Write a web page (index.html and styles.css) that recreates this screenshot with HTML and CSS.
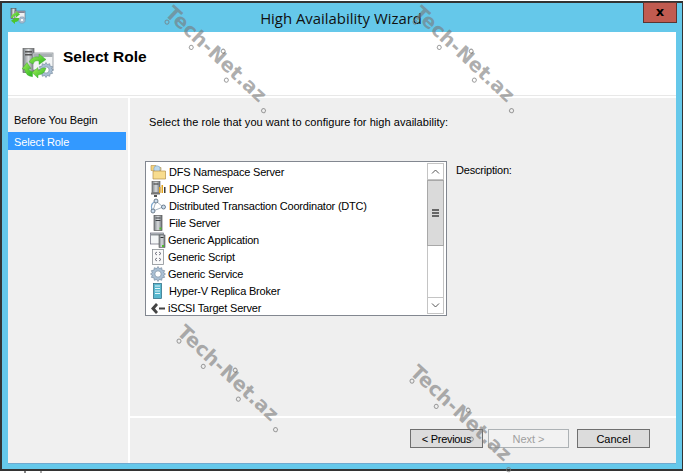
FILE: index.html
```html
<!DOCTYPE html>
<html lang="en">
<head>
<meta charset="utf-8">
<title>High Availability Wizard</title>
<link rel="stylesheet" href="styles.css">
</head>
<body>
<svg class="defs" width="0" height="0" aria-hidden="true">
  <defs>
    <linearGradient id="srv" x1="0" x2="1" y1="0" y2="0"><stop offset="0" stop-color="#7d8388"/><stop offset=".5" stop-color="#d9dcde"/><stop offset="1" stop-color="#6c7176"/></linearGradient>
    <linearGradient id="grn" x1="0" x2="1" y1="0" y2="1"><stop offset="0" stop-color="#a6ef5c"/><stop offset="1" stop-color="#27b51f"/></linearGradient>
    <symbol id="gear" viewBox="0 0 16 16">
      <path d="M8 0.5l1.400 2.100 2.300-.9.4 2.500 2.500.4-.9 2.300L15.500 8l-1.800 1.100.9 2.300-2.500.4-.4 2.500-2.300-.9L8 15.500l-1.400-2.100-2.300.9-.4-2.500-2.500-.4.9-2.300L.5 8l1.800-1.100-.9-2.300 2.500-.4.4-2.500 2.300.9z" fill="#a9bfd4" stroke="#6d8296" stroke-width=".6"/>
      <circle cx="8" cy="8" r="3.200" fill="#fff" stroke="#7e93a6" stroke-width=".8"/>
    </symbol>
    <symbol id="tower" viewBox="0 0 16 16">
      <rect x="4" y="0.500" width="8" height="15" fill="url(#srv)" stroke="#555" stroke-width=".7"/>
      <rect x="5.500" y="2.500" width="5" height="1" fill="#3c4044"/>
      <rect x="5.500" y="5" width="5" height="1" fill="#3c4044"/>
      <rect x="9.500" y="12.500" width="2" height="2" fill="#4fc02f"/>
    </symbol>
  </defs>
</svg>
<div class="window">
  <div class="titlebar">
    <svg class="title-icon" viewBox="0 0 16 16" width="16" height="16" aria-hidden="true">
      <rect x="1" y="0.500" width="5" height="10" fill="url(#srv)" stroke="#555" stroke-width=".6"/>
      <rect x="5" y="3" width="10" height="8" fill="#eef1f3" stroke="#667" stroke-width=".6"/>
      <rect x="5.300" y="3.300" width="9.400" height="1.600" fill="#778"/>
      <use href="#gear" x="8" y="8" width="8" height="8"/>
      <path d="M1 10a5 5 0 0 1 5-5v-2l4 3.200-4 3.200v-2a3 3 0 0 0-3 2.600z" fill="url(#grn)"/>
      <path d="M9 10a4 4 0 0 1-4 4v2l-4-3.200 4-3z" fill="#4cc52d"/>
    </svg>
    <span class="title-text">High Availability Wizard</span>
    <div class="close-btn"><span class="close-x">x</span></div>
  </div>
  <div class="client">
    <header class="head">
      <svg class="head-icon" viewBox="0 0 32 32" width="32" height="32" aria-hidden="true">
        <rect x="1" y="0.500" width="11" height="24" fill="url(#srv)" stroke="#666" stroke-width=".7"/>
        <rect x="3" y="3" width="7" height="1.500" fill="#555"/>
        <rect x="3" y="6" width="7" height="1.500" fill="#555"/>
        <rect x="11" y="5" width="20" height="17" fill="#f3f5f6" stroke="#8a9096" stroke-width=".8"/>
        <rect x="11.500" y="5.500" width="19" height="3.500" fill="#a9afb4"/>
        <use href="#gear" x="16" y="14" width="16" height="16"/>
        <path d="M7 14a9 9 0 0 1 10-5V6l7 5.500-7 5v-3.500a5 5 0 0 0-6 3z" fill="url(#grn)" stroke="#2f9e2a" stroke-width=".4"/>
        <path d="M0 21l5-6.500 4 6-2.500 .2a5 5 0 0 0 4 3v5a9 9 0 0 1-8-7.500z" fill="url(#grn)" stroke="#2f9e2a" stroke-width=".4"/>
        <path d="M24 20a9 9 0 0 1-8 7v3l-6-5.500 6-5v3a5 5 0 0 0 4-2.500z" fill="url(#grn)" stroke="#2f9e2a" stroke-width=".4"/>
      </svg>
      <h1 class="head-title">Select Role</h1>
    </header>
    <div class="body">
      <nav class="steps">
        <div class="step">Before You Begin</div>
        <div class="step step-active">Select Role</div>
      </nav>
      <main class="main">
        <div class="content">
          <p class="prompt">Select the role that you want to configure for high availability:</p>
          <div class="picker">
            <div class="listbox">
              <ul class="items">
                <li class="item">
                  <svg class="ico" viewBox="0 0 16 16" aria-hidden="true"><path d="M1 6V1.500h5l1 2h4v3H1z" fill="#f3d27d" stroke="#b5904a" stroke-width=".6"/><circle cx="7" cy="5" r="3.200" fill="#bcd9ee" stroke="#7a9db8" stroke-width=".6"/><path d="M3 7h12.500v8H3z" fill="#f8dc8e" stroke="#b5904a" stroke-width=".7"/></svg>
                  <span>DFS Namespace Server</span>
                </li>
                <li class="item">
                  <svg class="ico" viewBox="0 0 16 16" aria-hidden="true"><rect x="2" y="0.500" width="8" height="11" fill="url(#srv)" stroke="#555" stroke-width=".6"/><rect x="3.500" y="2.500" width="5" height="1" fill="#333"/><rect x="1" y="11.500" width="9" height="2" fill="#777"/><rect x="9" y="6" width="1.500" height="6" fill="#e1a21b"/><rect x="11.500" y="4" width="1.500" height="8" fill="#e1a21b"/><rect x="14" y="6" width="1.500" height="6" fill="#3a3a3a"/><rect x="4" y="14" width="3" height="2" fill="#555"/></svg>
                  <span>DHCP Server</span>
                </li>
                <li class="item">
                  <svg class="ico" viewBox="0 0 16 16" aria-hidden="true"><path d="M6 3L13 9 3 13z" fill="none" stroke="#9ab" stroke-width=".9"/><path d="M3 13a6 6 0 0 1 1-9" fill="none" stroke="#7fa9cf" stroke-width="1.200"/><circle cx="6" cy="3" r="2" fill="#cde" stroke="#456" stroke-width=".7"/><circle cx="13.500" cy="9" r="2" fill="#cde" stroke="#456" stroke-width=".7"/><circle cx="3" cy="13" r="2" fill="#cde" stroke="#456" stroke-width=".7"/></svg>
                  <span>Distributed Transaction Coordinator (DTC)</span>
                </li>
                <li class="item">
                  <svg class="ico" viewBox="0 0 16 16" aria-hidden="true"><use href="#tower"/></svg>
                  <span>File Server</span>
                </li>
                <li class="item item-tight">
                  <svg class="ico" viewBox="0 0 16 16" aria-hidden="true"><rect x="0.500" y="1" width="13" height="11" fill="#f4f6f7" stroke="#667" stroke-width=".7"/><rect x="1" y="1.500" width="12" height="2" fill="#8d9499"/><rect x="9" y="3" width="6" height="12.500" fill="url(#srv)" stroke="#555" stroke-width=".6"/><rect x="10.500" y="5" width="3" height="1" fill="#333"/><rect x="12" y="13" width="2" height="2" fill="#4fc02f"/></svg>
                  <span>Generic Application</span>
                </li>
                <li class="item item-tight">
                  <svg class="ico" viewBox="0 0 16 16" aria-hidden="true"><rect x="2.500" y="0.500" width="11" height="15" fill="#fafafa" stroke="#8a8f94" stroke-width=".8"/><path d="M7 3L5 4.500 7 6M9 3l2 1.500L9 6M7 9l-2 1.500L7 12M9 9l2 1.500L9 12" fill="none" stroke="#556" stroke-width=".8"/></svg>
                  <span>Generic Script</span>
                </li>
                <li class="item item-tight">
                  <svg class="ico" viewBox="0 0 16 16" aria-hidden="true"><use href="#gear"/></svg>
                  <span>Generic Service</span>
                </li>
                <li class="item">
                  <svg class="ico" viewBox="0 0 16 16" aria-hidden="true"><rect x="3.500" y="0.500" width="8" height="15" fill="#58b8cf" stroke="#23667c" stroke-width=".7"/><path d="M5 3h5M5 5.500h5M5 8h5M5 10.500h5" stroke="#e5f7fb" stroke-width="1"/></svg>
                  <span>Hyper-V Replica Broker</span>
                </li>
                <li class="item item-tight">
                  <svg class="ico" viewBox="0 0 16 16" aria-hidden="true"><path d="M6 3L1 8.500l5 5.500 2-2-3-3.500 3-3.500zM9 7.500h6v2H9z" fill="#444"/></svg>
                  <span>iSCSI Target Server</span>
                </li>
              </ul>
              <div class="scrollbar">
                <div class="sb-btn"><svg viewBox="0 0 9 5" width="9" height="5" aria-hidden="true"><path d="M1 4.500l3.500-3.500 3.500 3.500" fill="none" stroke="#555" stroke-width="1"/></svg></div>
                <div class="sb-thumb"><span class="grip"></span><span class="grip"></span><span class="grip"></span></div>
                <div class="sb-track"></div>
                <div class="sb-btn"><svg viewBox="0 0 9 5" width="9" height="5" aria-hidden="true"><path d="M1 .5l3.500 3.500 3.500-3.500" fill="none" stroke="#555" stroke-width="1"/></svg></div>
              </div>
            </div>
            <div class="desc">Description:</div>
          </div>
        </div>
        <footer class="footer">
          <button class="btn btn-prev" type="button">&lt; Previous</button>
          <button class="btn btn-next" type="button" disabled>Next &gt;</button>
          <button class="btn btn-cancel" type="button">Cancel</button>
        </footer>
      </main>
    </div>
  </div>
</div>
<div class="below"><span class="below-bit"></span></div>
<div class="wm wm-a"><span class="wm-text">Tech-Net.az</span><i class="ring r1"></i><i class="ring r2"></i><i class="ring r3"></i><i class="ring r4"></i><i class="ring r5"></i></div>
<div class="wm wm-b"><span class="wm-text">Tech-Net.az</span><i class="ring r1"></i><i class="ring r2"></i><i class="ring r3"></i><i class="ring r4"></i><i class="ring r5"></i></div>
<div class="wm wm-c"><span class="wm-text">Tech-Net.az</span><i class="ring r1"></i><i class="ring r2"></i><i class="ring r3"></i><i class="ring r4"></i><i class="ring r5"></i></div>
<div class="wm wm-d"><span class="wm-text">Tech-Net.az</span><i class="ring r1"></i><i class="ring r2"></i><i class="ring r3"></i><i class="ring r4"></i><i class="ring r5"></i></div>
</body>
</html>
```
FILE: styles.css
```css
* { box-sizing: border-box; }
html, body { margin: 0; padding: 0; }
body {
  width: 683px;
  height: 473px;
  overflow: hidden;
  position: relative;
  background: #fff;
  font-family: "Liberation Sans", Arial, sans-serif;
  font-size: 11px;
  color: #000;
}
.defs { position: absolute; }
.window {
  margin-top: 1px;
  width: 683px;
  height: 470px;
  background: #65c8ea;
  border: 2px solid #333;
  border-width: 2px 1px 2px 2px;
  display: flex;
  flex-direction: column;
  padding: 0 6px 6px 6px;
}
.titlebar {
  height: 29px;
  flex: none;
  position: relative;
  display: flex;
  align-items: center;
  justify-content: center;
}
.title-icon { position: absolute; left: 2px; top: 5px; }
.title-text {
  font-family: "Open Sans", sans-serif;
  font-size: 14.9px;
  color: #111;
  margin-left: -2px;
  margin-top: 1px;
}
.close-btn {
  position: absolute;
  right: -1px;
  top: -1px;
  width: 34px;
  height: 21px;
  background: #c15b50;
  border: 1px solid #5b3531;
  display: flex;
  align-items: center;
  justify-content: center;
}
.close-x {
  font-family: "DejaVu Sans", sans-serif;
  font-weight: 700;
  font-size: 13px;
  line-height: 1;
  margin-top: -3px;
}
.client {
  flex: 1;
  min-height: 0;
  display: flex;
  flex-direction: column;
  background: #fff;
  box-shadow: 0 1px 0 #6fa9cf;
}
.head {
  height: 66px;
  flex: none;
  display: flex;
  align-items: flex-start;
  position: relative;
  padding: 16px 0 0 14px;
  background: linear-gradient(#fff 63px, #e8e8e8 63px, #e8e8e8 64px, #fff 64px);
}
.head-title {
  margin: 1px 0 0 9px;
  font-size: 15.5px;
  line-height: 16px;
  font-weight: 700;
}
.body {
  flex: 1;
  min-height: 0;
  display: flex;
  gap: 2px;
}
.steps {
  width: 120px;
  flex: none;
  background: #f0f0f0;
  padding-top: 13px;
}
.step {
  height: 21px;
  line-height: 18px;
  padding-left: 6px;
  letter-spacing: -0.1px;
}
.step-active {
  height: 18px;
  width: 118px;
  background: #3399ff;
  color: #fff;
  line-height: 20px;
}
.main {
  flex: 1;
  min-width: 0;
  background: #efefef;
  display: flex;
  flex-direction: column;
}
.content {
  flex: 1;
  min-height: 0;
  padding: 17px 0 0 15px;
}
.prompt {
  margin: 0 0 0 4px;
  line-height: 14px;
  letter-spacing: 0.05px;
}
.picker {
  display: flex;
  margin-top: 32px;
}
.listbox {
  width: 302px;
  height: 155px;
  background: #fff;
  border: 1px solid #828790;
  display: flex;
  overflow: hidden;
}
.items {
  list-style: none;
  margin: 0;
  padding: 1px 0 0 4px;
  flex: 1;
  min-width: 0;
  overflow: hidden;
}
.item {
  height: 17px;
  display: flex;
  align-items: center;
  gap: 3px;
  white-space: nowrap;
  letter-spacing: -0.2px;
}
.item-tight { gap: 2px; }
.ico { width: 16px; height: 16px; flex: none; }
.scrollbar {
  width: 17px;
  margin: 1px 2px 1px 0;
  flex: none;
  display: flex;
  flex-direction: column;
}
.sb-btn {
  height: 17px;
  flex: none;
  background: #fff;
  border: 1px solid #c4c4c4;
  display: flex;
  align-items: center;
  justify-content: center;
}
.sb-thumb {
  height: 66px;
  flex: none;
  background: #dadada;
  border: 1px solid #a8a8a8;
  display: flex;
  flex-direction: column;
  align-items: center;
  justify-content: center;
  gap: 1px;
}
.grip { width: 7px; height: 2px; background: #666; }
.sb-track {
  flex: 1;
  background: #fff;
  border-left: 1px solid #c4c4c4;
  border-right: 1px solid #c4c4c4;
}
.desc {
  margin: 2px 0 0 9px;
  line-height: 14px;
  letter-spacing: -0.2px;
}
.footer {
  height: 47px;
  flex: none;
  border-top: 2px solid #fff;
  display: flex;
  padding: 11px 0 0 280px;
}
.btn {
  font: inherit;
  height: 19px;
  padding: 0;
  color: #000;
  background: #dcdcdc;
  border: 1px solid #6f6f6f;
  border-radius: 0;
}
.btn-prev { width: 73px; letter-spacing: -0.3px; }
.btn-next {
  width: 81px;
  margin-left: 5px;
  background: #f2f2f2;
  border-color: #adb2b5;
  color: #a0a0a0;
}
.btn-cancel { width: 73px; margin-left: 8px; }
.below {
  height: 2px;
  position: relative;
}
.below-bit {
  position: absolute;
  left: 24px;
  top: 0;
  width: 18px;
  height: 2px;
  border-left: 2px solid #888;
  border-right: 2px solid #aaa;
}
.wm {
  position: absolute;
  width: 136px;
  height: 20px;
  transform-origin: 0 50%;
  transform: rotate(43deg);
  color: rgba(120, 120, 120, 0.6);
}
.wm-text {
  display: block;
  font-family: "DejaVu Sans", sans-serif;
  font-weight: 700;
  font-size: 19.5px;
  line-height: 20px;
  letter-spacing: 0.2px;
  white-space: nowrap;
}
.ring {
  position: absolute;
  width: 5px;
  height: 5px;
  border: 1.5px solid rgba(120, 120, 120, 0.7);
  border-radius: 50%;
  background: transparent;
}
.r1 { left: 5px; top: 17px; }
.r2 { left: 40px; top: 19px; }
.r3 { left: 66px; top: 0; }
.r4 { left: 88px; top: 19px; }
.r5 { left: 136px; top: 16px; }
.wm-a { left: 168px; top: 0; }
.wm-b { left: 416px; top: 0; }
.wm-c { left: 180px; top: 319px; }
.wm-d { left: 413px; top: 359px; }
```
